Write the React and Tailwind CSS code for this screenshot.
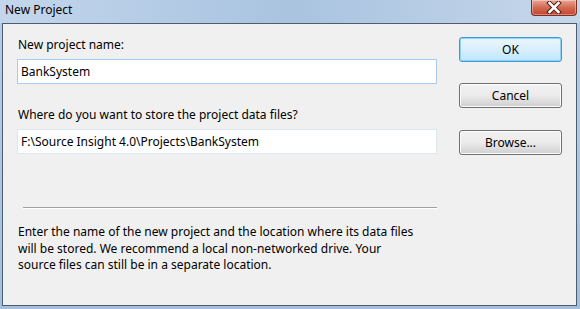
const font = { fontFamily: '"Noto Sans", "Liberation Sans", sans-serif' };

function CloseButton() {
  return (
    <div className="mr-[3px] flex h-[16px] w-[46px] items-center justify-center self-start rounded-b-[4px] border border-t-0 border-[#7a2e24] bg-gradient-to-b from-[#e9a697] via-[#d26a52] to-[#c2452e] shadow-[inset_0_0_0_1px_rgba(255,255,255,0.35)]">
      <svg width="16" height="13" viewBox="0 0 16 13">
        <path d="M3.5 2 L12.5 11 M12.5 2 L3.5 11" stroke="#4a1a14" strokeWidth="4.5" strokeLinecap="square" />
        <path d="M3.5 2 L12.5 11 M12.5 2 L3.5 11" stroke="#ffffff" strokeWidth="2.5" strokeLinecap="square" />
      </svg>
    </div>
  );
}

function DlgButton({ children, isDefault }) {
  return (
    <button
      className={
        isDefault
          ? 'flex h-[25px] w-[103px] items-center justify-center rounded-[3px] border border-[#3c9ad8] bg-gradient-to-b from-[#eaf6fd] via-[#d9effc] to-[#bee6fd] text-[12px] text-black shadow-[inset_0_0_0_1px_#8ed3f5]'
          : 'flex h-[25px] w-[103px] items-center justify-center rounded-[3px] border border-[#707070] bg-gradient-to-b from-[#f2f2f2] via-[#ebebeb] to-[#cfcfcf] text-[12px] text-black shadow-[inset_0_0_0_1px_#fcfcfc]'
      }
    >
      {children}
    </button>
  );
}

function TextBox({ value, focused }) {
  return (
    <div
      className={
        focused
          ? 'flex h-[25px] w-[420px] items-center border border-[#a9cbec] bg-white pl-[3px] text-[12px] text-black'
          : 'flex h-[25px] w-[420px] items-center border border-[#dfe6ee] bg-white pl-[3px] text-[12px] text-black'
      }
    >
      {value}
    </div>
  );
}

export default function App() {
  return (
    <div className="flex h-[309px] w-[580px] flex-col overflow-hidden bg-gradient-to-b from-[#b6cde6] to-[#a4c0de]" style={font}>
      {/* Title bar */}
      <div className="flex h-[23px] shrink-0 items-start justify-between bg-gradient-to-r from-[#c3d6ec] via-[#a9c3e0] to-[#c6d7ea]">
        <span className="pl-[5px] pt-[2px] text-[12px] leading-[16px] text-black">New Project</span>
        <CloseButton />
      </div>

      {/* Client area */}
      <div className="mb-[3px] ml-[2px] mr-[3px] flex flex-1 flex-col border border-[#4e5d6d] bg-[#f0f0f0] pl-[14px] pt-[13px]">
        <div className="flex">
          <div className="flex flex-col">
            <label className="pl-[1px] text-[12px] leading-[16px] text-black">New project name:</label>
            <div className="mt-[6px]">
              <TextBox value="BankSystem" focused />
            </div>
            <label className="mt-[23px] pl-[1px] text-[12px] leading-[16px] text-black">
              Where do you want to store the project data files?
            </label>
            <div className="mt-[6px]">
              <TextBox value="F:\Source Insight 4.0\Projects\BankSystem" />
            </div>
          </div>
          <div className="ml-[22px] flex flex-col gap-[21px]">
            <DlgButton isDefault>OK</DlgButton>
            <DlgButton>Cancel</DlgButton>
            <div className="mt-[1px]">
              <DlgButton>Browse...</DlgButton>
            </div>
          </div>
        </div>

        <div className="ml-[6px] mt-[52px] h-[2px] w-[414px] border-t border-[#a0a0a0] border-b border-b-white" />

        <p className="mt-[15px] pl-[1px] text-[12px] leading-[16.6px] text-black">
          Enter the name of the new project and the location where its data files
          <br />
          will be stored. We recommend a local non-networked drive. Your
          <br />
          source files can still be in a separate location.
        </p>
      </div>
    </div>
  );
}
